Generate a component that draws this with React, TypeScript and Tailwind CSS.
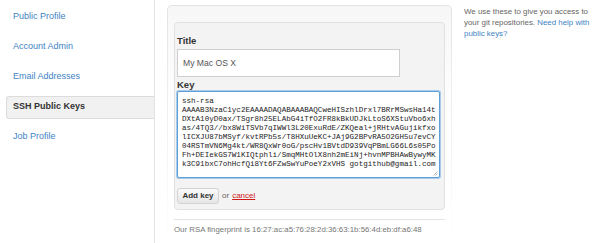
import React from 'react';

const navItems = [
  { label: 'Public Profile' },
  { label: 'Account Admin' },
  { label: 'Email Addresses' },
  { label: 'SSH Public Keys', active: true },
  { label: 'Job Profile' },
];

// key text, split the way the textarea wraps it
const keyLines = [
  'ssh-rsa',
  'AAAAB3NzaC1yc2EAAAADAQABAAABAQCweHISzhlDrxl7BRrMSwsHa14t',
  'DXtA10yD0ax/TSgr8h25ELAbG4iTfO2FR8kBkUDJkLtoS6XStuVbo6xh',
  'as/4TQ3//bx8WiTSVb7qIWWl3L20ExuRdE/ZKQeal+jRHtvAGujikfxo',
  'lICXJU87bMSyf/kvtRPb5s/T8HXuUeKC+JAj9G2BPvRA5O2GH5u7evCY',
  '04RSTmVN6Mg4kt/WR8QxWr0oG/pscHv1BVtdD939VqPBmLG66L6s05Po',
  'Fh+DEIekGS7W1KIQtphli/SmqMHtOlX8nh2mEiNj+hvnMPBHAwBywyMK',
  'k3C91bxC7ohHcfQi8Yt6FZwSwYuPoeY2xVHS gotgithub@gmail.com',
];

function Sidebar() {
  return (
    <ul className="w-[155px] shrink-0 border-r border-[#e3e3e3] pt-[2px]">
      {navItems.map((item) =>
        item.active ? (
          <li key={item.label} className="h-[30px] flex items-center">
            <div className="ml-[6px] w-[149px] h-[23px] flex items-center pl-[6px] bg-[#f1f1f1] border border-r-0 border-[#dcdcdc] rounded-l-[3px] text-[9px] font-bold text-[#333]">
              {item.label}
            </div>
          </li>
        ) : (
          <li key={item.label} className="h-[30px] flex items-center pl-[13px]">
            <a href="#" className="text-[9px] text-[#4183c4]">
              {item.label}
            </a>
          </li>
        )
      )}
    </ul>
  );
}

function KeyForm() {
  return (
    <div className="w-[271px] h-[188px] bg-[#f3f3f3] border border-[#e1e1e1] rounded-[4px] pl-[2px] pt-[12px]">
      <label className="block text-[9.5px] leading-[12px] font-bold text-[#333]">Title</label>
      <div className="mt-[2px] w-[223px] h-[28px] bg-white border border-[#cfcfcf] flex items-center pl-[5px] text-[8.6px] text-[#555]">
        My Mac OS X
      </div>
      <label className="block mt-[3px] text-[9.5px] leading-[10px] font-bold text-[#333]">Key</label>
      <div className="relative mt-px w-[263px] h-[87px] bg-white border border-[#5b9fdb] rounded-[2px] shadow-[0_0_0_1px_rgba(120,175,225,0.6)] pt-[5px] pl-[4px] font-['Liberation_Mono',monospace] text-[7.55px] leading-[9px] text-[#222] whitespace-pre overflow-hidden">
        {keyLines.map((line) => (
          <div key={line}>{line}</div>
        ))}
        <svg className="absolute right-[1px] bottom-[1px]" width="6" height="6" viewBox="0 0 6 6">
          <path d="M5.5 1.5 L1.5 5.5 M5.5 3.5 L3.5 5.5" stroke="#aaa" strokeWidth="0.8" />
        </svg>
      </div>
      <div className="mt-[10px] flex items-center gap-[3px] text-[8px]">
        <button className="w-[42px] h-[16px] rounded-[3px] border border-[#d2d2d2] bg-gradient-to-b from-[#fafafa] to-[#e6e6e6] font-bold text-[8px] text-[#333]">
          Add key
        </button>
        <span className="text-[#666]">or</span>
        <a href="#" className="text-[#d01818] underline">cancel</a>
      </div>
    </div>
  );
}

export default function App() {
  return (
    <div className="flex w-[600px] h-[243px] bg-white font-['Liberation_Sans',Arial,sans-serif] overflow-hidden">
      <Sidebar />

      <div className="w-[297px] shrink-0 pl-[12px] pt-[5px]">
        {/* outer box, border fades out towards the bottom */}
        <div className="w-[285px] h-[238px] p-px rounded-t-[5px] bg-gradient-to-b from-[#e3e3e3] via-[#f4f4f4] via-60% to-white">
          <div className="h-full rounded-t-[4px] bg-gradient-to-b from-[#f7f7f7] to-white to-50% px-[6px] pt-[16px]">
            <KeyForm />
            <div className="mt-[9px] border-t border-[#e3e3e3] pt-[4px] text-[7.85px] text-[#777]">
              Our RSA fingerprint is 16:27:ac:a5:76:28:2d:36:63:1b:56:4d:eb:df:a6:48
            </div>
          </div>
        </div>
      </div>

      <div className="pl-[12px] pt-[6px] text-[7.9px] leading-[11px] text-[#666] whitespace-nowrap">
        We use these to give you access to
        <br />
        your git repositories.{' '}
        <a href="#" className="text-[#4183c4]">
          Need help with
          <br />
          public keys?
        </a>
      </div>
    </div>
  );
}
